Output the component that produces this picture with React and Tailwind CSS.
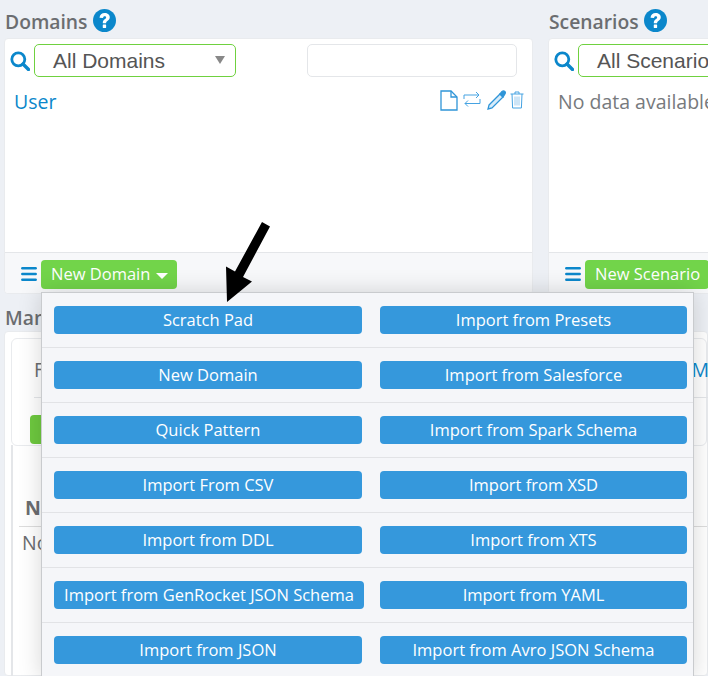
import React from 'react';
import { Menu } from 'lucide-react';

const menuRows = [
  ['Scratch Pad', 'Import from Presets'],
  ['New Domain', 'Import from Salesforce'],
  ['Quick Pattern', 'Import from Spark Schema'],
  ['Import From CSV', 'Import from XSD'],
  ['Import from DDL', 'Import from XTS'],
  ['Import from GenRocket JSON Schema', 'Import from YAML'],
  ['Import from JSON', 'Import from Avro JSON Schema'],
];

function HelpIcon() {
  return (
    <svg viewBox="0 0 24 24" className="w-[23px] h-[23px] ml-[5px] mt-[-3px] shrink-0">
      <circle cx="12" cy="12" r="12" fill="#0b87cb" />
      <path d="M6.800 9.200c.2-3.100 2.400-4.900 5.400-4.900 3 0 5.300 1.800 5.300 4.400 0 2-1.200 3-2.500 3.900-1 .7-1.300 1.100-1.300 2.300H10.200c0-2.200.7-3.200 2-4.100 1-.7 1.500-1.100 1.500-1.900 0-.8-.6-1.300-1.500-1.300-1 0-1.600.7-1.700 1.800z" fill="#fff" />
      <rect x="10.200" y="16.200" width="3.500" height="3.500" rx=".4" fill="#fff" />
    </svg>
  );
}

function SearchIcon() {
  return (
    <svg viewBox="0 0 20 20" className="w-[20px] h-[20px] mr-[4px] ml-[-1px] shrink-0" fill="none" stroke="#0b87cb">
      <circle cx="8.300" cy="8.300" r="6.500" strokeWidth="2.800" />
      <path d="M13 13l5.500 5.500" strokeWidth="3.400" strokeLinecap="round" />
    </svg>
  );
}

function PanelHead({ title }) {
  return (
    <div className="h-[38px] flex items-center pl-[1px] pt-[5px]">
      <span className="text-[19.300px] font-semibold text-[#6b6d70] leading-none">{title}</span>
      <HelpIcon />
    </div>
  );
}

function FilterSelect({ label, wide }) {
  return (
    <div className="flex items-center h-[33px] w-[202px] shrink-0 border border-[#6fd13f] rounded-[5px] bg-white pl-[18px] relative font-['Liberation_Sans',sans-serif] text-[21px] text-[#555555] whitespace-nowrap">
      {label}
      {wide && <span className="absolute right-[10px] top-[11px] w-0 h-0 border-x-[5px] border-x-transparent border-t-[8px] border-t-[#888888]" />}
    </div>
  );
}

function RowIcons() {
  return (
    <div className="flex items-start mt-[1px]">
      <svg viewBox="0 0 18 21" className="w-[18px] h-[21px]" fill="none" stroke="#2f95d8" strokeWidth="1.300">
        <path d="M1 1h10l6 6v13H1z" />
        <path d="M11 1v6h6" />
      </svg>
      <svg viewBox="0 0 18 17" className="w-[18px] h-[17px] ml-[5px] mt-[1px]" fill="none" stroke="#46a3e2" strokeWidth="1">
        <path d="M1 8V4h15M13 1l3 3-3 3" />
        <path d="M17 8v4.500H2M5 9.500l-3 3 3 3" />
      </svg>
      <svg viewBox="0 0 20 20" className="w-[20px] h-[20px] ml-[6px]" fill="none" stroke="#2f95d8" strokeWidth="1.300">
        <path d="M2 15L13 4l3 3L5 18l-4 1z" fill="#d8ecfa" />
        <path d="M13 4l2-2.500c1-.8 2-.8 2.800 0s.6 1.800 0 2.600L16 7z" fill="#2f95d8" />
      </svg>
      <svg viewBox="0 0 14 18" className="w-[14px] h-[18px] ml-[3px] mt-[1px]" fill="none" stroke="#46a3e2" strokeWidth="1">
        <path d="M.5 3h13M5 3V1h4v2" />
        <path d="M2 3l.6 14h8.800L12 3" />
        <path d="M5 5.500v9M7 5.500v9M9 5.500v9" stroke="#9ccbee" />
      </svg>
    </div>
  );
}

function FooterBar({ label, caret }) {
  return (
    <div className="h-[41px] bg-[#f7f8fa] border-t border-[#e4e6e9] flex items-center pl-[14px] pt-[2px] rounded-b-[4px]">
      <Menu size={20} strokeWidth={3} className="text-[#0b87cb] mr-[2px] shrink-0" />
      <div className="h-[29px] bg-[#72d44a] rounded-[4px] flex items-center pl-[10px] pr-[9px] text-white text-[16.500px] whitespace-nowrap">
        {label}
        {caret && <span className="ml-[6px] mt-[3px] w-0 h-0 border-x-[6px] border-x-transparent border-t-[6px] border-t-white" />}
      </div>
    </div>
  );
}

export default function App() {
  return (
    <div className="relative w-[708px] h-[676px] overflow-hidden bg-[#edf0f5] font-['Open_Sans',sans-serif]">
      {/* Top panels */}
      <div className="flex gap-[15px] pl-[4px]">
        <div className="w-[529px] shrink-0">
          <PanelHead title="Domains" />
          <div className="h-[256px] bg-white rounded-[4px] border border-[#e9ebee] flex flex-col">
            <div className="flex items-center pt-[5px] pl-[6px]">
              <SearchIcon />
              <FilterSelect label="All Domains" wide />
              <div className="w-[210px] h-[33px] border border-[#e4e6e9] rounded-[5px] ml-[71px]" />
            </div>
            <div className="flex-1 flex items-start justify-between pl-[9px] pr-[8px] pt-[12px]">
              <span className="text-[19.500px] text-[#0b87cb] leading-[26px]">User</span>
              <RowIcons />
            </div>
            <FooterBar label="New Domain" caret />
          </div>
        </div>
        <div className="w-[300px] shrink-0">
          <PanelHead title="Scenarios" />
          <div className="h-[256px] bg-white rounded-[4px] border border-[#e9ebee] flex flex-col">
            <div className="flex items-center pt-[5px] pl-[6px]">
              <SearchIcon />
              <FilterSelect label="All Scenarios" />
            </div>
            <div className="flex-1 pl-[9px] pt-[12px]">
              <span className="text-[19.500px] text-[#777a7d] leading-[26px]">No data available</span>
            </div>
            <FooterBar label="New Scenario" />
          </div>
        </div>
      </div>

      {/* Lower panel, mostly covered by the menu */}
      <div className="pl-[5px] pt-[11px]">
        <div className="text-[19.300px] font-semibold text-[#6b6d70] leading-[26px]">Manage</div>
      </div>
      <div className="ml-[4px] h-[345px] bg-white border border-[#e9ebee] rounded-[4px] pt-[6px] pl-[6px] text-[#6b6d70]">
        <div className="h-[108px] border border-[#e9ebee] rounded-[6px] pt-[18px] pl-[22px]">
          <div className="h-[41px] border-b border-[#e4e6e9] flex justify-between text-[19.500px] leading-[26px] mr-[-3px]">
            <span>F</span>
            <span className="text-[#0b87cb]">M</span>
          </div>
          <div className="w-[60px] h-[29px] bg-[#6ec93f] rounded-[4px] mt-[17px] ml-[-4px]" />
        </div>
        <div className="h-[240px] border-l-2 border-[#e4e6e9] pl-[6px]">
          <div className="border-b border-[#dddddd] mt-[-1px] pt-[48px] pb-[4px] pl-[6px] font-bold text-[19.500px] leading-[29px]">Name</div>
          <div className="text-[19.500px] pl-[3px] pt-[3px] leading-[26px]">No</div>
        </div>
      </div>

      {/* New Domain dropdown */}
      <div className="absolute left-[41px] top-[292px] w-[653px] bg-[#f5f6f9] border border-[#c9cbce] shadow-[0_0_22px_rgba(0,0,0,0.16)]">
        {menuRows.map((row, i) => (
          <div key={i} className="h-[55px] pt-[13px] pl-[12px] flex border-b border-[#e2e3e6]">
            {row.map((text, j) => (
              <div
                key={text}
                className={`h-[28px] bg-[#3598dc] rounded-[4px] flex items-center justify-center text-white text-[16.500px] whitespace-nowrap ${j === 0 ? (i === 5 ? 'w-[310px]' : 'w-[308px]') : 'w-[307px]'} ${j === 1 ? (i === 5 ? 'ml-[16px]' : 'ml-[18px]') : ''}`}
              >
                {text}
              </div>
            ))}
          </div>
        ))}
      </div>

      {/* Annotation arrow */}
      <svg viewBox="0 0 50 82" className="absolute left-[224px] top-[221px] w-[50px] h-[82px]">
        <path d="M38 1l8 4.500L19 56l9 4.500L3 81 2 45.500l9 5z" fill="#000" />
      </svg>
    </div>
  );
}
